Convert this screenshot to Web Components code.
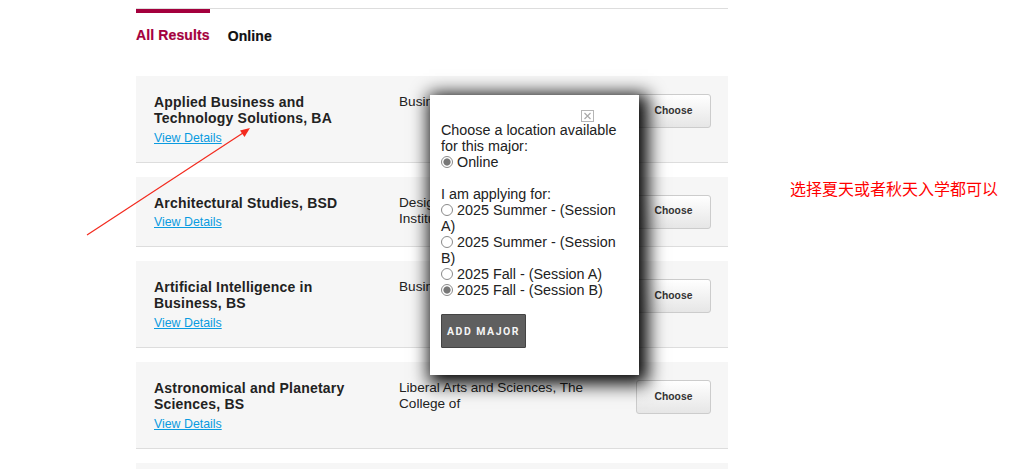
<!doctype html>
<html lang="en"><head><meta charset="utf-8"><title>Results</title>
<style>
html,body{margin:0;padding:0;height:469px;overflow:hidden;background:#fff;font-family:"Liberation Sans",Arial,sans-serif;color:#222}
</style></head><body>
<app-page>
  <result-tabs slot="tabs"></result-tabs>
  <program-row><span slot="name">Applied Business and<br>Technology Solutions, BA</span><span slot="college">Business</span></program-row>
  <program-row><span slot="name">Architectural Studies, BSD</span><span slot="college">Design<br>Institute</span></program-row>
  <program-row><span slot="name">Artificial Intelligence in<br>Business, BS</span><span slot="college">Business</span></program-row>
  <program-row><span slot="name">Astronomical and Planetary<br>Sciences, BS</span><span slot="college">Liberal Arts and Sciences, The<br>College of</span></program-row>
  <empty-row></empty-row>
</app-page>
<major-modal></major-modal>
<red-annotation></red-annotation>
<script>
function def(name, html){
  customElements.define(name, class extends HTMLElement{
    constructor(){super();this.attachShadow({mode:'open'}).innerHTML=html;}
  });
}
def('app-page',`<style>
:host{display:block;width:592px;margin-left:136px}
.list{display:flex;flex-direction:column;gap:14px;margin-top:33px}
</style><slot name="tabs"></slot><div class="list"><slot></slot></div>`);
def('result-tabs',`<style>
:host{display:block;border-top:1px solid #ddd;margin-top:8px}
.tabs{display:flex;gap:18px;height:34px}
.t{font:bold 14px/1 "Liberation Sans",Arial,sans-serif;white-space:nowrap;-webkit-text-stroke:.2px currentColor}
.a{color:#a4003d;border-top:4px solid #a4003d;padding-top:15px;letter-spacing:.12px}
.b{color:#111;padding-top:20px;letter-spacing:.1px}
</style><div class="tabs"><div class="t a">All Results</div><div class="t b">Online</div></div>`);
def('program-row',`<style>
:host{display:grid;grid-template-columns:245px 237px 75px;padding:18px 17px 0 18px;background:#f6f6f6;border-bottom:1px solid #ddd;font-family:"Liberation Sans",Arial,sans-serif}
.n{font:bold 14px/16px "Liberation Sans",Arial,sans-serif;letter-spacing:.2px;color:#222;white-space:nowrap}
a{display:block;font-size:12.35px;line-height:14px;margin:4.6px 0 17.15px;color:#0a9be0;text-decoration:underline}
.c{font-size:13.6px;line-height:16px;color:#222;white-space:nowrap}
button{justify-self:end;width:75px;height:34px;font:bold 10.3px "Liberation Sans",Arial,sans-serif;color:#333;border:1px solid #ccc;border-radius:3px;background:linear-gradient(#fff,#e6e6e6);padding:0 0 2px;margin:0}
</style><div><div class="n"><slot name="name"></slot></div><a href="#">View Details</a></div><div class="c"><slot name="college"></slot></div><button>Choose</button>`);
def('empty-row',`<style>:host{display:block;height:20px;background:#f6f6f6}</style>`);
def('major-modal',`<style>
:host{position:absolute;left:430px;top:95px;width:209px;height:280px;box-sizing:border-box;background:#fff;padding:15px 11px 0;box-shadow:4px 4px 17px 5px #000;font:14.35px/16px "Liberation Sans",Arial,sans-serif;color:#222}
.x{display:block;margin:0 0 0 140px;width:13px;height:12px}
label{display:block}
input{appearance:none;width:12px;height:12px;margin:0;border:1px solid #8a8a8a;border-radius:50%;background:#fff;vertical-align:-1px;box-sizing:border-box}
input:checked{background:radial-gradient(circle,#777 0,#777 3.2px,#fff 4px)}
.gap{height:16px}
button{display:block;margin-top:16px;width:85px;height:34px;background:#5f5f5f;border:1px solid #444;border-radius:1px;color:#f4f4f4;font:bold 10.5px Roboto,"Liberation Sans",sans-serif;letter-spacing:1.5px;padding:0}
</style>
<svg class="x" viewBox="0 0 13 12" aria-hidden="true"><rect x=".5" y=".5" width="12" height="11" fill="#fff" stroke="#b5b5b5"/><path d="M3.5 3 9.5 9M9.5 3 3.5 9" stroke="#aaa" stroke-width="1.2" fill="none"/></svg>
<div>Choose a location available for this major:</div>
<label><input type="radio" name="l" checked> Online</label>
<div class="gap"></div>
<div>I am applying for:</div>
<label><input type="radio" name="s"> 2025 Summer - (Session A)</label>
<label><input type="radio" name="s"> 2025 Summer - (Session B)</label>
<label><input type="radio" name="s"> 2025 Fall - (Session A)</label>
<label><input type="radio" name="s" checked> 2025 Fall - (Session B)</label>
<button>ADD MAJOR</button>`);
def('red-annotation',`<style>
:host{position:absolute;left:0;top:0;width:1010px;height:469px;pointer-events:none}
svg{position:absolute;left:0;top:0}
.note{position:absolute;left:790px;top:178px;font:16px/20px "Noto Sans CJK SC",sans-serif;color:#f00;white-space:nowrap}
</style>
<svg width="1010" height="469" aria-hidden="true"><path d="M87 235 246 131" stroke="#f32a1e" stroke-width="1.2" fill="none"/><path d="M250 128 240 130.5 244.5 137Z" fill="#f32a1e"/></svg>
<div class="note">选择夏天或者秋天入学都可以</div>`);
</script>
</body></html>
